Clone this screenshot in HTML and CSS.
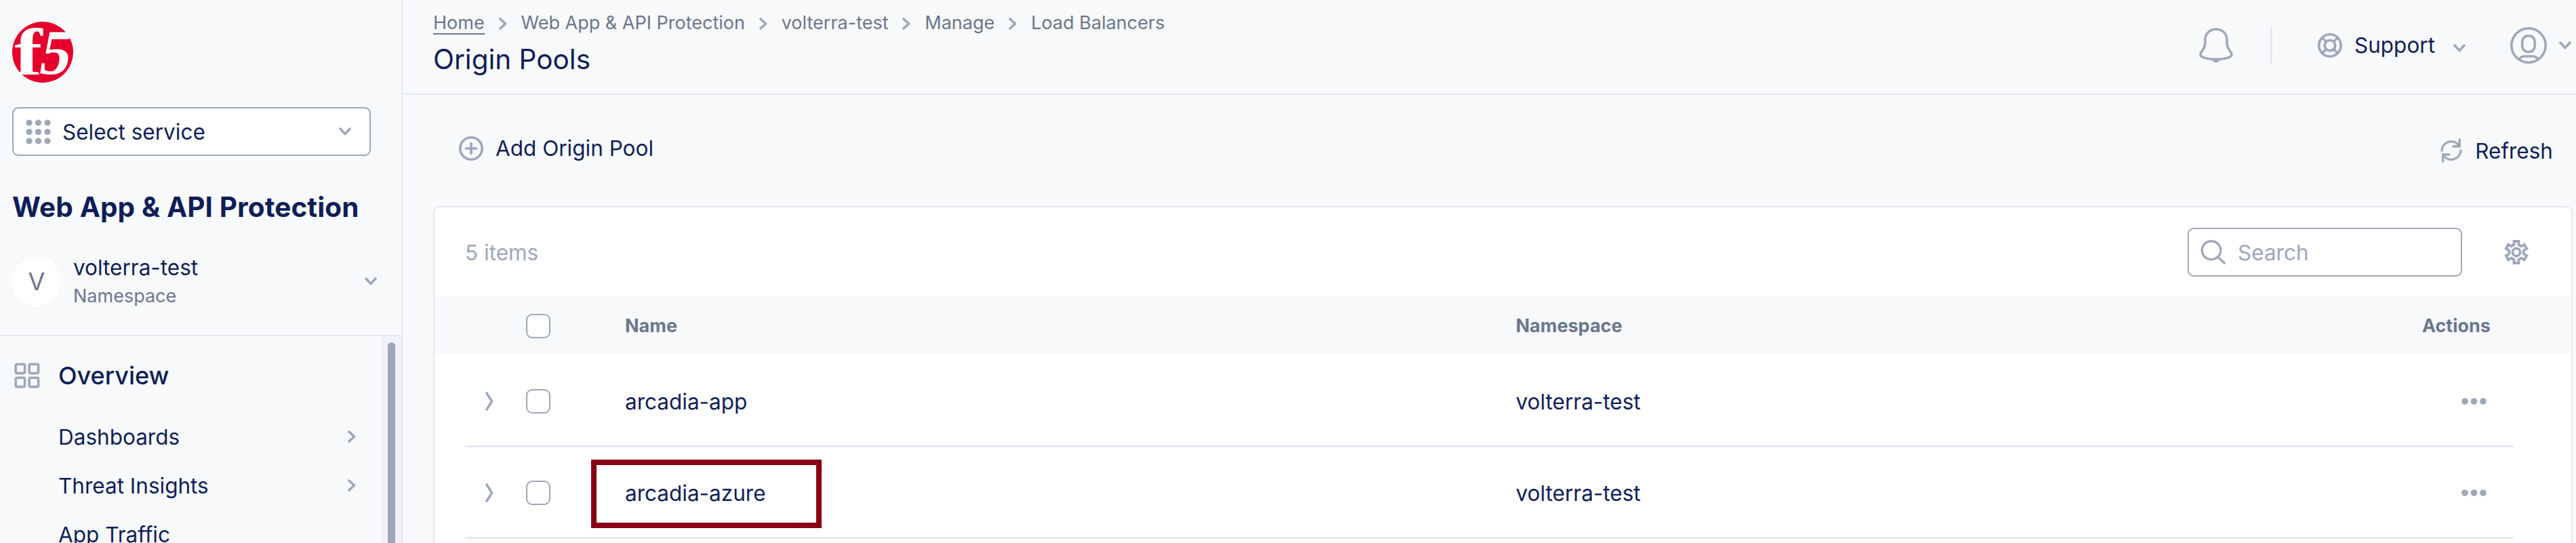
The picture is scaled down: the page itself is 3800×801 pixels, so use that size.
FILE: index.html
```html
<!DOCTYPE html>
<html lang="en">
<head>
<meta charset="utf-8">
<title>Origin Pools</title>
<link rel="stylesheet" href="styles.css">
</head>
<body>
<svg class="defs" aria-hidden="true">
  <symbol id="chev-down" viewBox="0 0 18 12"><path d="M2 2l7 7.6L16 2"/></symbol>
  <symbol id="chev-right" viewBox="0 0 12 18"><path d="M2 2l7.6 7L2 16"/></symbol>
  <symbol id="dots" viewBox="0 0 37 12"><circle cx="5" cy="6" r="4.8"/><circle cx="18.5" cy="6" r="4.8"/><circle cx="32" cy="6" r="4.8"/></symbol>
  <symbol id="expand" viewBox="0 0 12 28"><path d="M2 2l7.6 12L2 26"/></symbol>
</svg>
<div class="app">
  <aside class="sidebar">
    <div class="brand">
      <svg class="logo" viewBox="0 0 90 90">
        <circle cx="45" cy="45" r="45" fill="#e4002b"/>
        <g class="logo-text">
          <text transform="translate(3 77.5) scale(1.28 1)" font-size="97">f</text>
          <text transform="translate(37 77) skewX(-11) scale(.95 1)" font-size="94">5</text>
        </g>
      </svg>
      <button class="service">
        <svg class="grid-dots" viewBox="0 0 37 37">
          <circle cx="5" cy="5" r="4.6"/><circle cx="18.5" cy="5" r="4.6"/><circle cx="32" cy="5" r="4.6"/>
          <circle cx="5" cy="18.5" r="4.6"/><circle cx="18.5" cy="18.5" r="4.6"/><circle cx="32" cy="18.5" r="4.6"/>
          <circle cx="5" cy="32" r="4.6"/><circle cx="18.5" cy="32" r="4.6"/><circle cx="32" cy="32" r="4.6"/>
        </svg>
        <span class="grow">Select service</span>
        <svg class="down"><use href="#chev-down"/></svg>
      </button>
      <h1 class="product">Web App &amp; API Protection</h1>
      <div class="namespace">
        <span class="avatar">V</span>
        <div class="grow ns-text">
          <div class="ns-name">volterra-test</div>
          <div class="ns-label">Namespace</div>
        </div>
        <svg class="down"><use href="#chev-down"/></svg>
      </div>
    </div>
    <div class="nav">
      <nav class="grow">
        <div class="nav-group">
          <svg class="overview-icon" viewBox="0 0 38 38">
            <rect x="2.2" y="2.2" width="13.4" height="13.4" rx="2"/><rect x="22.2" y="2.2" width="13.4" height="13.4" rx="2"/>
            <rect x="2.2" y="22.2" width="13.4" height="13.4" rx="2"/><rect x="22.2" y="22.2" width="13.4" height="13.4" rx="2"/>
          </svg>
          <span>Overview</span>
        </div>
        <a class="nav-item">Dashboards<svg class="right"><use href="#chev-right"/></svg></a>
        <a class="nav-item">Threat Insights<svg class="right"><use href="#chev-right"/></svg></a>
        <a class="nav-item">App Traffic</a>
      </nav>
      <div class="track"><div class="thumb"></div></div>
    </div>
  </aside>

  <main class="main">
    <header class="header">
      <div class="grow">
        <div class="crumbs">
          <a class="home">Home</a><svg class="right"><use href="#chev-right"/></svg>
          <a>Web App &amp; API Protection</a><svg class="right"><use href="#chev-right"/></svg>
          <a>volterra-test</a><svg class="right"><use href="#chev-right"/></svg>
          <a>Manage</a><svg class="right"><use href="#chev-right"/></svg>
          <a>Load Balancers</a>
        </div>
        <h2 class="page-title">Origin Pools</h2>
      </div>
      <div class="tools">
        <svg class="bell" viewBox="0 0 50 52">
          <path d="M25 2.2C15.5 2.200 9 9.500 9 18.500v5c0 6-1.600 8.400-4 12C2.700 38.800 2 39.500 2 42c0 4 8.500 7.200 23 7.200S48 46 48 42c0-2.500-.7-3.200-3-6.500-2.400-3.600-4-6-4-12v-5C41 9.500 34.500 2.200 25 2.200z" transform="scale(1 .94)"/>
          <path class="fill" d="M18.500 46.500h13c-.8 3.200-3.200 4.500-6.500 4.500s-5.700-1.300-6.500-4.500z"/>
        </svg>
        <span class="sep"></span>
        <svg class="support-icon" viewBox="0 0 36 36">
          <circle cx="18" cy="18" r="16.200"/><circle cx="18" cy="18" r="7.800"/>
          <path d="M6.500 6.500l6 6M29.500 6.500l-6 6M6.500 29.500l6-6M29.500 29.500l-6-6"/>
        </svg>
        <span class="support">Support</span>
        <svg class="down support-chev"><use href="#chev-down"/></svg>
        <svg class="user" viewBox="0 0 54 54">
          <circle cx="27" cy="27" r="25.200"/>
          <path d="M27 12.800c-6 0-9.300 4-9.300 9.500v4.500c0 5.500 3.300 9.700 9.300 9.700s9.300-4.200 9.300-9.700v-4.500c0-5.500-3.300-9.500-9.300-9.500z"/>
          <path d="M13 47.500c2.500-3.800 4.500-4.500 8-4.500h12c3.500 0 5.500.7 8 4.500"/>
        </svg>
        <svg class="down"><use href="#chev-down"/></svg>
      </div>
    </header>

    <div class="toolbar">
      <button class="add">
        <svg class="add-icon" viewBox="0 0 38 36"><circle cx="19" cy="18" r="16.200"/><path d="M19 10.500v15M11.500 18h15"/></svg>
        Add Origin Pool
      </button>
      <button class="refresh">
        <svg class="refresh-icon" viewBox="0 0 32 36">
          <path d="M2 18A14 14 0 0 1 26.500 9.500M28.300 2v10H19"/>
          <path d="M30 18A14 14 0 0 1 5.500 26.500M3.700 34V24H13"/>
        </svg>
        Refresh
      </button>
    </div>

    <section class="card">
      <div class="card-top">
        <span class="count">5 items</span>
        <div class="search">
          <svg class="search-icon" viewBox="0 0 38 36"><ellipse cx="16" cy="15.200" rx="13.800" ry="13.500"/><path d="M26 25.500l9.500 8.500"/></svg>
          <span>Search</span>
        </div>
        <svg class="gear" viewBox="0 0 36 36">
          <path d="M14.500 2h7v5.100l3.800 2.200 4.400-2.600 3.500 6.100-3.900 2.300c-.6.300-.8.700-.8 1.300v3.200c0 .6.200 1 .8 1.300l3.900 2.300-3.500 6.100-4.400-2.600-3.800 2.200V34h-7v-5.100l-3.800-2.200-4.400 2.600-3.500-6.100 3.900-2.300c.6-.3.800-.7.800-1.300v-3.200c0-.6-.2-1-.8-1.300l-3.900-2.300 3.500-6.100 4.400 2.600 3.800-2.200z"/>
          <circle cx="18" cy="18" r="5.600"/>
        </svg>
      </div>
      <div class="thead cols">
        <span></span>
        <span class="check"></span>
        <span>Name</span>
        <span>Namespace</span>
        <span class="actions">Actions</span>
      </div>
      <div class="row cols">
        <svg class="expand"><use href="#expand"/></svg>
        <span class="check"></span>
        <span>arcadia-app</span>
        <span>volterra-test</span>
        <svg class="more"><use href="#dots"/></svg>
      </div>
      <div class="row cols">
        <svg class="expand"><use href="#expand"/></svg>
        <span class="check"></span>
        <span>arcadia-azure</span>
        <span>volterra-test</span>
        <svg class="more"><use href="#dots"/></svg>
        <div class="highlight"></div>
      </div>
    </section>
  </main>
</div>
</body>
</html>
```
FILE: styles.css
```css
* { box-sizing: border-box; }
body {
  margin: 0;
  background: #f7f9fb;
  color: #0f1e57;
  font-family: Inter, sans-serif;
  font-size: 31.5px;
  overflow: hidden;
}
.defs { position: absolute; width: 0; height: 0; }
svg {
  display: block;
  flex: none;
  fill: none;
  stroke: #9ea8ba;
  stroke-width: 3.6;
  stroke-linecap: round;
  stroke-linejoin: round;
}
h1, h2 { margin: 0; }
button {
  border: 0;
  padding: 0;
  background: none;
  color: inherit;
  font: inherit;
  text-align: left;
  display: flex;
  align-items: center;
}
.grow { flex: 1; }
.app { display: flex; width: 3800px; height: 801px; }

/* Sidebar */
.sidebar {
  width: 594px;
  flex: none;
  display: flex;
  flex-direction: column;
  border-right: 2px solid #e6e8f4;
}
.brand {
  height: 496px;
  flex: none;
  padding: 32px 36px 0 18px;
  border-bottom: 2px solid #e6e8f4;
}
.logo { width: 90px; height: 90px; stroke: none; overflow: visible; }
.logo-text { fill: #fff; font-family: "Liberation Serif", serif; font-weight: 700; }
.service {
  width: 529px;
  height: 72px;
  margin-top: 36px;
  padding: 0 27px 0 18px;
  background: #fff;
  border: 2px solid #9ea8ba;
  border-radius: 9px;
}
.grid-dots { width: 37px; height: 37px; margin-right: 17px; fill: #9ea8ba; stroke: none; }
.down { width: 18px; height: 12px; }
.right { width: 12px; height: 18px; }
.product {
  margin-top: 52px;
  font-size: 40.5px;
  line-height: 48px;
  font-weight: 700;
  letter-spacing: .1px;
  white-space: nowrap;
}
.namespace { display: flex; align-items: center; height: 72px; margin-top: 49px; }
.avatar {
  width: 72px;
  height: 72px;
  margin-right: 18px;
  border-radius: 50%;
  background: #fff;
  color: #6b778c;
  font-size: 36px;
  line-height: 72px;
  text-align: center;
}
.ns-text { line-height: 42px; padding-top: 1px; }
.ns-label { font-size: 27px; color: #6b778c; }
.nav { flex: 1; display: flex; min-height: 0; }
.nav-group {
  display: flex;
  align-items: center;
  height: 60px;
  margin: 28px 0 24px;
  padding-left: 21px;
  font-size: 36px;
  font-weight: 500;
}
.overview-icon { width: 38px; height: 38px; margin-right: 27px; }
.nav-item {
  display: flex;
  align-items: center;
  justify-content: space-between;
  height: 72px;
  padding: 0 38px 0 86px;
}
.track { width: 29px; padding: 9px 9px 0; background: #f1f2f8; }
.thumb { height: 320px; width: 11px; border-radius: 5.5px; background: #9ea8ba; }

/* Header */
.main { flex: 1; min-width: 0; }
.header {
  display: flex;
  height: 140px;
  padding: 17px 7px 0 45px;
  border-bottom: 2px solid #e6e8f4;
}
.crumbs {
  display: flex;
  align-items: center;
  height: 34px;
  gap: 20.9px;
  color: #6b778c;
  font-size: 27px;
  line-height: 34px;
}
.home { height: 34px; border-bottom: 2px solid #6b778c; }
.crumbs .right { margin-top: 2px; }
.page-title {
  margin-top: 13px;
  font-size: 40.5px;
  line-height: 48px;
  font-weight: 400;
}
.tools { display: flex; align-items: center; height: 100px; }
.bell { width: 50px; height: 52px; }
.bell .fill { fill: #9ea8ba; stroke: none; }
.sep { width: 3px; height: 54px; margin: 0 67px 0 55px; background: #e6e8f4; }
.support-icon { width: 36px; height: 36px; }
.support { width: 119px; margin: 0 27px 0 18px; line-height: 48px; }
.support-chev { margin: 7px 66px 0 0; }
.user { width: 54px; height: 54px; margin-right: 18px; }

/* Toolbar */
.toolbar {
  display: flex;
  justify-content: space-between;
  height: 164px;
  padding: 0 34px 0 82px;
}
.add { padding-bottom: 7px; }
.add-icon { width: 38px; height: 36px; margin-right: 17px; }
.refresh-icon { width: 32px; height: 36px; margin-right: 19px; stroke-width: 3.4; }

/* Table */
.card {
  height: 520px;
  margin: 0 5px 0 45px;
  background: #fff;
  border: 2px solid #e6e8f4;
  border-radius: 9px;
}
.card-top { display: flex; align-items: center; height: 131px; padding: 1px 63px 0 45px; }
.count { flex: 1; color: #9ea8ba; }
.search {
  display: flex;
  align-items: center;
  width: 405px;
  height: 72px;
  margin-right: 62px;
  padding-left: 17px;
  border: 2px solid #9ea8ba;
  border-radius: 9px;
  color: #9ea8ba;
}
.search-icon { width: 38px; height: 36px; margin-right: 17px; stroke-width: 3.4; }
.gear { width: 36px; height: 36px; stroke-width: 3.8; stroke-linejoin: miter; }
.cols {
  display: grid;
  grid-template-columns: 90px 146px 1314px 1fr auto;
  align-items: center;
}
.thead {
  height: 86px;
  margin: 0 2px 2px 0;
  padding: 0 117px 0 45px;
  background: #f7f9fb;
  color: #6b778c;
  font-size: 27px;
  font-weight: 700;
}
.check {
  width: 36px;
  height: 36px;
  margin-top: 2px;
  background: #fff;
  border: 2px solid #9ea8ba;
  border-radius: 9px;
}
.row {
  position: relative;
  height: 135px;
  margin: 0 85px 0 45px;
  border-bottom: 3px solid #e6e8f4;
}
.row > span { margin-top: 2px; }
.expand { width: 12px; height: 28px; margin: 2px 0 0 30px; }
.more { width: 37px; height: 12px; margin: 2px 40px 0 0; fill: #9ea8ba; stroke: none; }
.highlight {
  position: absolute;
  left: 186px;
  top: 18px;
  width: 340px;
  height: 101px;
  border: 8px solid #880015;
}
```
